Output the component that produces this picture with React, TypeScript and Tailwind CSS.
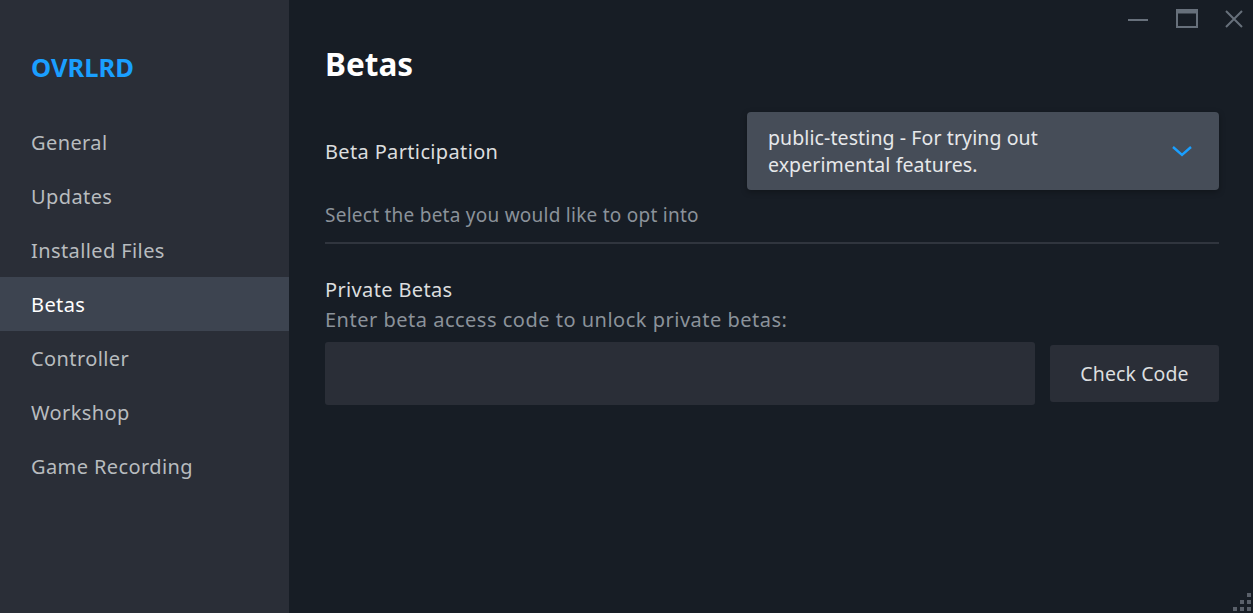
import { useState } from 'react'

const navItems = ['General', 'Updates', 'Installed Files', 'Betas', 'Controller', 'Workshop', 'Game Recording']

function WindowControls() {
  return (
    <div className="absolute right-[10px] top-0 flex items-center">
      <button className="w-[40px] h-[38px] flex items-center justify-center text-[#67707b]">
        <svg width="22" height="22" viewBox="0 0 22 22">
          <line x1="1" y1="12" x2="21" y2="12" stroke="currentColor" strokeWidth="2" />
        </svg>
      </button>
      <button className="w-[57px] h-[38px] flex items-center justify-center text-[#67707b]">
        <svg width="22" height="20" viewBox="0 0 22 20">
          <rect x="1" y="1" width="20" height="17" fill="none" stroke="currentColor" strokeWidth="2" />
          <line x1="1" y1="3" x2="21" y2="3" stroke="currentColor" strokeWidth="3" />
        </svg>
      </button>
      <button className="w-[28px] h-[38px] flex items-center justify-end text-[#67707b]">
        <svg width="18" height="18" viewBox="0 0 18 18">
          <path d="M1 1 L17 17 M17 1 L1 17" stroke="currentColor" strokeWidth="2" />
        </svg>
      </button>
    </div>
  )
}

export default function App() {
  const [active, setActive] = useState('Betas')
  const [code, setCode] = useState('')

  return (
    <div className="relative flex w-[1253px] h-[613px] overflow-hidden bg-[#171d25]" style={{ fontFamily: '"Noto Sans", "Open Sans", sans-serif' }}>
      {/* Sidebar */}
      <div className="w-[289px] shrink-0 bg-[#2a2e37] flex flex-col">
        <div className="pl-[31px] pt-[50px] pb-[31px] text-[25.5px] leading-[34px] font-bold text-[#1a9fff]">OVRLRD</div>
        <div className="flex flex-col">
          {navItems.map(item => (
            <button
              key={item}
              onClick={() => setActive(item)}
              className={`h-[54px] pl-[31px] pt-[2px] text-left text-[20px] tracking-[0.4px] ${active === item ? 'bg-[#3d4450] text-white' : 'text-[#b8bcbf]'}`}>
              {item}
            </button>
          ))}
        </div>
      </div>

      {/* Main */}
      <div className="flex-1 pl-[36px] pr-[34px] pt-[43px]">
        <h1 className="text-[31.5px] leading-[42px] font-bold text-white">Betas</h1>

        <div className="mt-[27px] flex items-center justify-between">
          <div className="pt-[2px] text-[20px] tracking-[0.35px] text-[#dcdedf]">Beta Participation</div>
          <button className="w-[472px] h-[78px] rounded-[4px] bg-[#464d58] flex items-center justify-between pl-[21px] pr-[26px] text-left shadow-[0_2px_6px_rgba(0,0,0,0.3)]">
            <span className="text-[19.5px] leading-[27px] tracking-[0.1px] text-[#e6e8ea]">public-testing - For trying out<br />experimental features.</span>
            <svg width="22" height="14" viewBox="0 0 22 14" className="text-[#1a9fff]">
              <path d="M2 3 L11 11 L20 3" fill="none" stroke="currentColor" strokeWidth="2.4" />
            </svg>
          </button>
        </div>

        <div className="mt-[12px] text-[19px] leading-[26px] tracking-[0.25px] text-[#8b929a]">Select the beta you would like to opt into</div>
        <div className="mt-[14px] h-[2px] bg-[#30353e]" />

        <div className="mt-[33px] text-[20px] leading-[26px] tracking-[0.35px] text-[#dcdedf]">Private Betas</div>
        <div className="mt-[3px] text-[20px] leading-[27px] tracking-[0.5px] text-[#8b929a]">Enter beta access code to unlock private betas:</div>
        <div className="mt-[9px] flex items-center gap-[15px]">
          <input
            value={code}
            onChange={e => setCode(e.target.value)}
            className="flex-1 h-[63px] rounded-[3px] bg-[#2a2e37] px-4 text-[18px] text-white outline-none"
          />
          <button className="w-[169px] h-[57px] rounded-[3px] bg-[#2a2e37] text-[19.5px] tracking-[0.1px] text-[#dcdedf]">Check Code</button>
        </div>
      </div>

      <WindowControls />

      {/* resize grip */}
      <div className="absolute right-[2px] bottom-[2px] grid grid-cols-3 gap-[3px]">
        <span className="w-[4px] h-[4px]" />
        <span className="w-[4px] h-[4px]" />
        <span className="w-[4px] h-[4px] bg-[#5a606a]" />
        <span className="w-[4px] h-[4px]" />
        <span className="w-[4px] h-[4px] bg-[#5a606a]" />
        <span className="w-[4px] h-[4px] bg-[#5a606a]" />
        <span className="w-[4px] h-[4px] bg-[#5a606a]" />
        <span className="w-[4px] h-[4px] bg-[#5a606a]" />
        <span className="w-[4px] h-[4px] bg-[#5a606a]" />
      </div>
    </div>
  )
}
